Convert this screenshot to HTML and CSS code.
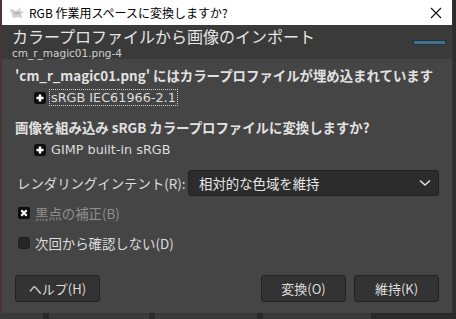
FILE: index.html
```html
<!DOCTYPE html>
<html lang="ja">
<head>
  <meta charset="UTF-8" />
  <title>RGB 作業用スペースに変換しますか?</title>
  <link rel="stylesheet" href="styles.css">
</head>
<body>
  <div class="window">
    <!-- Title bar -->
    <div class="titlebar">
      <svg class="app-icon" width="16" height="14" viewBox="0 0 16 14">
        <path d="M1 4 L4 3 L6 5 L9 4 L12 1 L11 5 L15 6 L12 8 L13 12 L8 11 L4 12 L3 8 Z" fill="#cfcfcf"/>
        <path d="M5 7 L11 7" stroke="#9a9a9a" stroke-width="1"/>
      </svg>
      <span class="title-text">RGB 作業用スペースに変換しますか?</span>
      <svg class="close" width="12" height="12" viewBox="0 0 12 12">
        <path d="M1 1 L11 11 M11 1 L1 11" stroke="#111" stroke-width="1.1"/>
      </svg>
    </div>

    <!-- Header -->
    <div class="header">
      <div class="header-text">
        <div class="header-title">カラープロファイルから画像のインポート</div>
        <div class="header-sub">cm_r_magic01.png-4</div>
      </div>
      <div class="header-bar"></div>
    </div>

    <!-- Body -->
    <div class="content">
      <p class="heading">'cm_r_magic01.png' にはカラープロファイルが埋め込まれています</p>
      <div class="profile">
        <svg class="expander" width="12" height="12" viewBox="0 0 12 12">
          <rect x="0" y="0" width="12" height="12" rx="3" fill="#0d0d0d"/>
          <path d="M6 2.5 V9.5 M2.5 6 H9.5" stroke="#fff" stroke-width="2.4"/>
        </svg>
        <span class="profile-name focused">sRGB IEC61966-2.1</span>
      </div>

      <p class="heading second">画像を組み込み sRGB カラープロファイルに変換しますか?</p>
      <div class="profile">
        <svg class="expander" width="12" height="12" viewBox="0 0 12 12">
          <rect x="0" y="0" width="12" height="12" rx="3" fill="#0d0d0d"/>
          <path d="M6 2.5 V9.5 M2.5 6 H9.5" stroke="#fff" stroke-width="2.4"/>
        </svg>
        <span class="profile-name">GIMP built-in sRGB</span>
      </div>

      <div class="intent-row">
        <span class="intent-label">レンダリングインテント(R):</span>
        <div class="combo">
          <span>相対的な色域を維持</span>
          <svg width="14" height="8" viewBox="0 0 14 8">
            <path d="M2 1.5 L7 6 L12 1.5" fill="none" stroke="#e0e0e0" stroke-width="1.6"/>
          </svg>
        </div>
      </div>

      <label class="check disabled">
        <svg class="box" width="12" height="12" viewBox="0 0 12 12">
          <rect x="0" y="0" width="12" height="12" rx="2" fill="#0d0d0d"/>
          <path d="M3.3 3.3 L8.7 8.7 M8.7 3.3 L3.3 8.7" stroke="#fff" stroke-width="2.2"/>
        </svg>
        <span>黒点の補正(B)</span>
      </label>
      <label class="check">
        <svg class="box" width="12" height="12" viewBox="0 0 12 12">
          <rect x="0.5" y="0.5" width="11" height="11" rx="2" fill="#262626" stroke="#1e1e1e"/>
        </svg>
        <span>次回から確認しない(D)</span>
      </label>

      <div class="buttons">
        <button class="btn">ヘルプ(H)</button>
        <div class="spacer"></div>
        <button class="btn">変換(O)</button>
        <button class="btn">維持(K)</button>
      </div>
    </div>
  </div>

  <!-- Background application peeking below -->
  <div class="behind">
    <span class="behind-tab w1"></span>
    <span class="behind-tab w2"></span>
    <span class="behind-tab w3"></span>
    <span class="behind-tab w4"></span>
  </div>
</body>
</html>
```

FILE: styles.css
```css
* {
  box-sizing: border-box;
}

body {
  margin: 0;
  width: 456px;
  height: 319px;
  overflow: hidden;
  background: #2e2e2e;
  font-family: "Noto Sans CJK JP", "Noto Sans", sans-serif;
  color: #dcdcdc;
}

.window {
  height: 313px;
  width: 453px;
  background: #454545;
  border-left: 2px solid #4a3434;
  border-right: 1px solid #333;
  display: flex;
  flex-direction: column;
}

.titlebar {
  height: 25px;
  background: #ffffff;
  color: #000;
  display: flex;
  align-items: center;
  padding-left: 7px;
  font-family: "Noto Sans CJK JP", sans-serif;
  font-size: 12px;
}

.app-icon {
  margin-right: 4px;
}

.title-text {
  flex: 1;
}

.close {
  margin-right: 10px;
}

.header {
  height: 34px;
  background: #3a3a3a;
  display: flex;
  align-items: flex-start;
  padding: 2px 6px 0 10px;
}

.header-text {
  flex: 1;
}

.header-title {
  font-size: 16px;
  line-height: 19px;
  color: #e6e6e6;
}

.header-sub {
  font-family: "DejaVu Sans", sans-serif;
  font-size: 10.5px;
  line-height: 12px;
  color: #d0d0d0;
  margin-top: 1px;
}

.header-bar {
  width: 33px;
  height: 5px;
  margin-top: 13px;
  background: #41718c;
  border: 1px solid #1d3340;
}

.content {
  flex: 1;
  display: flex;
  flex-direction: column;
  padding: 7px 13px 11px 13px;
}

.heading {
  margin: 0;
  font-size: 13.4px;
  line-height: 18px;
  font-weight: bold;
  color: #e2e2e2;
}

.heading.second {
  margin-top: 11px;
}

.profile {
  display: flex;
  align-items: center;
  padding-left: 19px;
  margin-top: 4px;
  height: 19px;
}

.expander {
  margin-right: 3px;
}

.profile-name {
  font-family: "DejaVu Sans", sans-serif;
  font-size: 12.8px;
  color: #dcdcdc;
  padding: 0 1px;
  border: 1px solid transparent;
}

.profile-name.focused {
  border: 1px dotted #cfcfcf;
}

.intent-row {
  display: flex;
  align-items: center;
  margin-top: 11px;
}

.intent-label {
  font-size: 13.4px;
  margin-left: 2px;
  width: 171px;
  color: #dcdcdc;
}

.combo {
  flex: 1;
  height: 26px;
  background: #2c2c2c;
  border: 1px solid #222;
  border-radius: 3px;
  display: flex;
  align-items: center;
  justify-content: space-between;
  padding: 0 6px 0 10px;
  font-size: 13.4px;
  color: #e6e6e6;
}

.check {
  display: flex;
  align-items: center;
  margin-top: 7px;
  height: 20px;
  font-size: 13.4px;
  color: #dcdcdc;
}

.check + .check {
  margin-top: 10px;
}

.check.disabled {
  color: #8f8f8f;
}

.box {
  margin: 0 5px 0 3px;
}

.buttons {
  margin-top: auto;
  display: flex;
  gap: 8px;
}

.spacer {
  flex: 1;
}

.btn {
  width: 85px;
  height: 27px;
  background: #333333;
  border: 1px solid #222;
  border-radius: 3px;
  color: #dedede;
  font-family: "Noto Sans CJK JP", sans-serif;
  font-size: 13px;
  padding: 0;
}

.behind {
  height: 6px;
  display: flex;
  gap: 6px;
  background: #2a2a2a;
}

.behind-tab {
  background: #3a3a3a;
  height: 6px;
}

.w1 { width: 43px; }
.w2 { width: 100px; }
.w3 { width: 102px; }
.w4 { width: 108px; }
```
